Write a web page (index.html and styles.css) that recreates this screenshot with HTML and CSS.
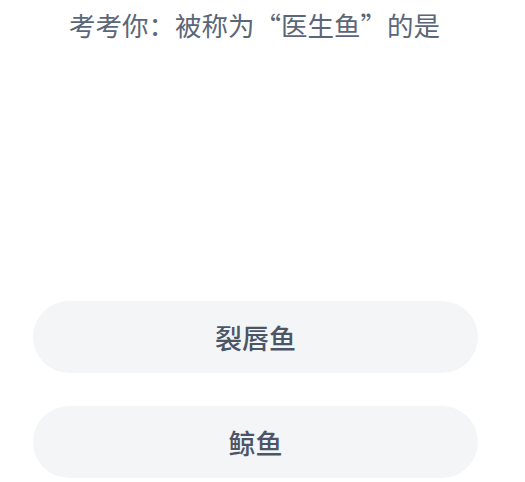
FILE: index.html
```html
<!DOCTYPE html>
<html lang="zh">
<head>
  <meta charset="UTF-8">
  <title>考考你</title>
  <meta name="viewport" content="width=device-width, initial-scale=1.0">
  <link rel="stylesheet" href="styles.css">
</head>
<body>
  <div class="page">
    <h1 class="question">考考你：被称为“医生鱼”的是</h1>

    <div class="options">
      <button class="option">裂唇鱼</button>
      <button class="option">鲸鱼</button>
    </div>
  </div>
</body>
</html>
```

FILE: styles.css
```css
body {
  margin: 0;
  background: #ffffff;
  font-family: "Noto Sans CJK SC", "Noto Sans", sans-serif;
}

.page {
  height: 482px;
  display: flex;
  flex-direction: column;
  overflow: hidden;
}

.question {
  margin: 0;
  padding-top: 7px;
  padding-right: 16px;
  text-align: center;
  font-size: 26.5px;
  font-weight: 400;
  line-height: 36px;
  color: #5b6679;
}

.options {
  margin-top: auto;
  padding: 0 47px 4px 33px;
  display: flex;
  flex-direction: column;
  gap: 33px;
}

.option {
  height: 72px;
  border: none;
  border-radius: 36px;
  background: #f3f5f7;
  color: #4b5566;
  font-family: inherit;
  font-size: 27px;
  font-weight: 500;
}
```
